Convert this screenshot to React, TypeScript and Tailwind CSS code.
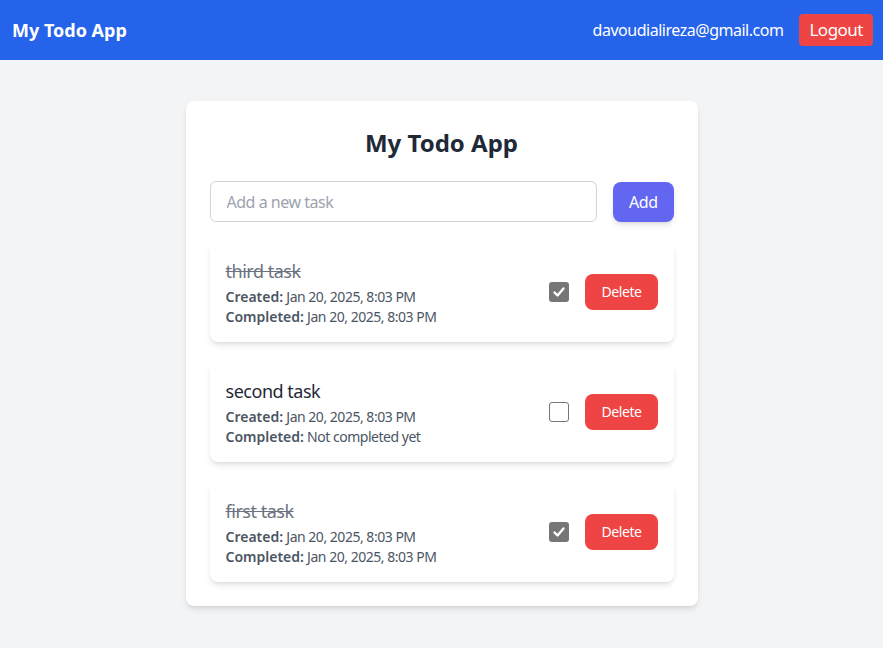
import React from "react";

const font = { fontFamily: '"Noto Sans", "Open Sans", sans-serif' };

type Todo = { title: string; done: boolean; completed: string };

const todos: Todo[] = [
  { title: "third task", done: true, completed: "Jan 20, 2025, 8:03 PM" },
  { title: "second task", done: false, completed: "Not completed yet" },
  { title: "first task", done: true, completed: "Jan 20, 2025, 8:03 PM" },
];

function Check({ checked }: { checked: boolean }) {
  if (checked) {
    return (
      <div className="w-5 h-5 rounded-[3px] bg-[#767676] flex items-center justify-center">
        <svg width="14" height="14" viewBox="0 0 14 14">
          <path d="M2.5 7.5 L5.5 10.5 L11.5 3.5" stroke="white" strokeWidth="2.4" fill="none" strokeLinecap="round" strokeLinejoin="round" />
        </svg>
      </div>
    );
  }
  return <div className="w-5 h-5 rounded-[3px] border border-[#767676] bg-white" />;
}

export default function App() {
  return (
    <div className="min-h-[648px] bg-[#f3f4f6]" style={font}>
      <header className="h-[60px] bg-[#2563eb] flex items-center justify-between pl-3 pr-2.5">
        <h1 className="text-lg font-bold text-white">My Todo App</h1>
        <div className="flex items-center gap-4">
          <span className="text-base text-white tracking-[-0.03em]">davoudialireza@gmail.com</span>
          <button className="bg-[#ef4444] text-white text-[17px] leading-7 tracking-[-0.03em] px-2.5 py-0.5 rounded">Logout</button>
        </div>
      </header>
      <main className="pt-[41px] flex justify-center">
        <div className="w-[512px] bg-white rounded-lg shadow-[0_4px_6px_-1px_rgba(0,0,0,0.1),0_2px_4px_-2px_rgba(0,0,0,0.1)] p-6">
          <h2 className="text-2xl font-bold text-[#1f2937] text-center mt-0.5 mb-[22px]">My Todo App</h2>
          <div className="flex items-center gap-4 mb-[19px]">
            <input
              className="flex-1 h-[41px] border border-[#d1d5db] rounded-md px-4 text-base tracking-[-0.03em] outline-none placeholder:text-[#9ca3af]"
              placeholder="Add a new task"
            />
            <button className="bg-[#6366f1] text-white text-base tracking-[-0.03em] px-4 h-10 rounded-lg shadow-[0_4px_6px_-1px_rgba(0,0,0,0.1),0_2px_4px_-2px_rgba(0,0,0,0.1)]">Add</button>
          </div>
          <div className="flex flex-col gap-[19px]">
            {todos.map((t) => (
              <div key={t.title} className="bg-white rounded-lg shadow-[0_4px_6px_-1px_rgba(0,0,0,0.1),0_2px_4px_-2px_rgba(0,0,0,0.1)] px-4 pt-4 pb-[15px] flex items-center justify-between">
                <div className="tracking-[-0.03em]">
                  <div className={"text-lg mb-[2px] " + (t.done ? "line-through text-[#6b7280]" : "text-[#1f2937]")}>{t.title}</div>
                  <div className="text-sm text-[#4b5563]">
                    <span className="font-semibold tracking-normal">Created:</span> Jan 20, 2025, 8:03 PM
                  </div>
                  <div className="text-sm text-[#4b5563]">
                    <span className="font-semibold tracking-normal">Completed:</span> {t.completed}
                  </div>
                </div>
                <div className="flex items-center gap-4">
                  <Check checked={t.done} />
                  <button className="bg-[#ef4444] text-white text-sm tracking-[-0.03em] px-4 h-9 rounded-lg">Delete</button>
                </div>
              </div>
            ))}
          </div>
        </div>
      </main>
    </div>
  );
}
